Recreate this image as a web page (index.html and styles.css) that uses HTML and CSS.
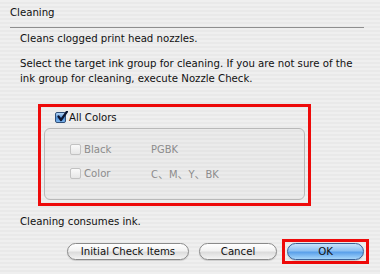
FILE: index.html
```html
<!DOCTYPE html>
<html>
<head>
<meta charset="utf-8">
<link rel="stylesheet" href="styles.css">
</head>
<body>
<div class="dialog">
  <div class="title">Cleaning</div>
  <div class="body">
    <p class="p1">Cleans clogged print head nozzles.</p>
    <p class="p2">Select the target ink group for cleaning. If you are not sure of the ink group for cleaning, execute Nozzle Check.</p>
    <div class="hilite">
      <div class="allrow">
        <span class="cb checked"><svg width="12" height="12" viewBox="0 0 12 12"><path d="M2.5 5.5 L5 9 L11 0.5" fill="none" stroke="#0b1430" stroke-width="2.2" stroke-linecap="round" stroke-linejoin="round"/></svg></span>
        <span class="alltext">All Colors</span>
      </div>
      <div class="group">
        <div class="row"><span class="cb dis"></span><span class="lbl">Black</span><span class="val">PGBK</span></div>
        <div class="row"><span class="cb dis"></span><span class="lbl">Color</span><span class="val">C、M、Y、BK</span></div>
      </div>
    </div>
    <p class="p3">Cleaning consumes ink.</p>
  </div>
  <div class="buttons">
    <span class="btn w1">Initial Check Items</span>
    <span class="btn w2">Cancel</span>
    <span class="okwrap"><span class="btn ok">OK</span></span>
  </div>
</div>
</body>
</html>
```

FILE: styles.css
```css
html, body {
  margin: 0;
  padding: 0;
}
body {
  width: 380px;
  height: 274px;
  overflow: hidden;
  font-family: "DejaVu Sans Condensed", "DejaVu Sans", "Noto Sans CJK JP", sans-serif;
  font-size: 11.3px;
  color: #111;
  background: repeating-linear-gradient(to bottom, #efefef 0px, #efefef 2px, #e9e9e9 2px, #e9e9e9 4px);
}
.dialog {
  padding-top: 6px;
}
.title {
  margin-left: 10px;
  width: 354px;
  line-height: 14px;
  border-bottom: 1px solid #8f8f8f;
  padding-bottom: 7px;
}
.body {
  padding-left: 20px;
}
p {
  margin: 0;
  line-height: 15px;
}
.p1 {
  margin-top: 3px;
}
.p2 {
  margin-top: 10px;
  width: 345px;
}
.hilite {
  margin-top: 18px;
  margin-left: 18px;
  width: 261px;
  height: 96px;
  border: 3px solid #ee0a0a;
  padding: 0 3px;
}
.allrow {
  display: flex;
  align-items: center;
  margin-top: 3px;
  padding-left: 11px;
  height: 14px;
}
.cb {
  display: inline-block;
  width: 11px;
  height: 11px;
  border-radius: 2px;
  box-sizing: border-box;
}
.checked {
  position: relative;
  border: 1px solid #30507a;
  background: linear-gradient(#b7d6f6, #4d8ed6 55%, #7fb6ee);
}
.checked svg {
  position: absolute;
  left: 0;
  top: -2px;
}
.alltext {
  margin-left: 3px;
}
.group {
  margin-top: 4px;
  height: 72px;
  border: 1px solid #b9b9b9;
  border-radius: 6px;
  box-sizing: border-box;
  background: rgba(0,0,0,0.015);
  padding-top: 14px;
  padding-left: 25px;
}
.row {
  display: flex;
  align-items: center;
  height: 12px;
  margin-bottom: 12px;
  color: #8c8c8c;
}
.dis {
  border: 1px solid #c2c2c2;
  background: linear-gradient(#fafafa, #e6e6e6);
}
.lbl {
  margin-left: 3px;
  width: 67px;
}
.val {
  font-size: 11px;
}
.p3 {
  margin-top: 8px;
}
.buttons {
  display: flex;
  justify-content: flex-end;
  align-items: center;
  margin-top: 10px;
  padding-right: 11px;
}
.btn {
  display: flex;
  align-items: center;
  justify-content: center;
  height: 17px;
  box-sizing: border-box;
  border-radius: 9px;
  border: 1px solid #8a8a8a;
  background: linear-gradient(#ffffff, #f2f2f2 45%, #dcdcdc 55%, #f4f4f4);
  box-shadow: 0 1px 1px rgba(0,0,0,0.15);
  color: #111;
}
.w1 {
  width: 122px;
  margin-right: 10px;
}
.w2 {
  width: 78px;
  margin-right: 5px;
}
.okwrap {
  display: flex;
  align-items: center;
  justify-content: center;
  width: 81px;
  height: 19px;
  border: 3px solid #ee0a0a;
}
.ok {
  width: 77px;
  border-color: #3a5f94;
  background: linear-gradient(#c9e3fb, #8cc0f2 45%, #5aa0ea 55%, #a6d6fb);
}
```
